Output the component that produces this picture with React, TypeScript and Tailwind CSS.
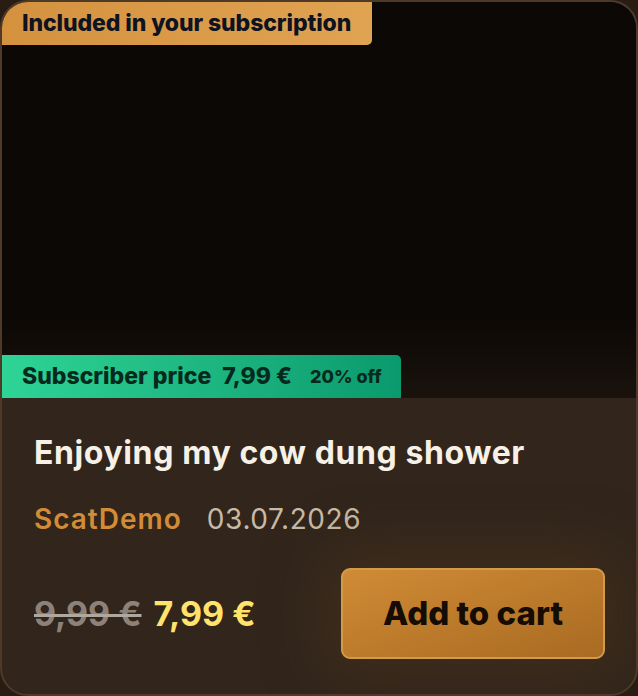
export default function App() {
  return (
    <div className="w-[638px] h-[696px] bg-[#281c13]" style={{ fontFamily: 'Inter, sans-serif' }}>
      <div className="relative w-full h-full rounded-[28px] border-2 border-[#4d3a28] overflow-hidden bg-[#31251c]">
        <div className="relative h-[396px] bg-[#0c0805]">
          <div className="absolute inset-x-0 bottom-0 h-[80px] bg-gradient-to-b from-transparent to-[#1a130d]" />
          <div className="absolute top-0 left-0 h-[43px] w-[370px] rounded-br-[5px] bg-gradient-to-r from-[#d4923f] to-[#e0a352] flex items-center pl-[20px]">
            <span className="text-[23px] font-extrabold text-[#0f1220] tracking-[-0.1px]">Included in your subscription</span>
          </div>
          <div className="absolute bottom-0 left-0 h-[43px] w-[399px] rounded-tr-[5px] bg-gradient-to-r from-[#2ed496] to-[#0a9a6d] flex items-center pl-[20px] text-[#06291d]">
            <span className="text-[23px] font-extrabold">Subscriber price</span>
            <span className="text-[23px] font-extrabold ml-[11px]">7,99 €</span>
            <span className="text-[18px] font-extrabold ml-[18px]">20% off</span>
          </div>
        </div>
        <div className="px-[32px] pt-[37px]">
          <h2 className="text-[32px] leading-[36px] font-bold text-[#f6f0e6] tracking-[0.6px]">Enjoying my cow dung shower</h2>
          <div className="mt-[32px] flex items-baseline gap-[25px] text-[28px] leading-[32px]">
            <span className="font-semibold text-[#d38c35] tracking-[1px]">ScatDemo</span>
            <span className="text-[#c8baa6] tracking-[0.6px]">03.07.2026</span>
          </div>
          <div className="mt-[33px] flex items-center justify-between">
            <div className="flex items-baseline gap-[12px] text-[34px] font-bold">
              <span className="text-[#8c827a] line-through decoration-[#b0a89f] decoration-[3px]">9,99 €</span>
              <span className="text-[#ffe36a]">7,99 €</span>
            </div>
            <button className="w-[264px] h-[91px] -mr-[1px] rounded-[9px] border-2 border-[#d39a4a] bg-gradient-to-br from-[#d08b35] to-[#a96b22] text-[33px] font-extrabold text-[#140c05] shadow-[0_0_60px_20px_rgba(90,60,30,0.35)]">
              Add to cart
            </button>
          </div>
        </div>
      </div>
    </div>
  );
}
